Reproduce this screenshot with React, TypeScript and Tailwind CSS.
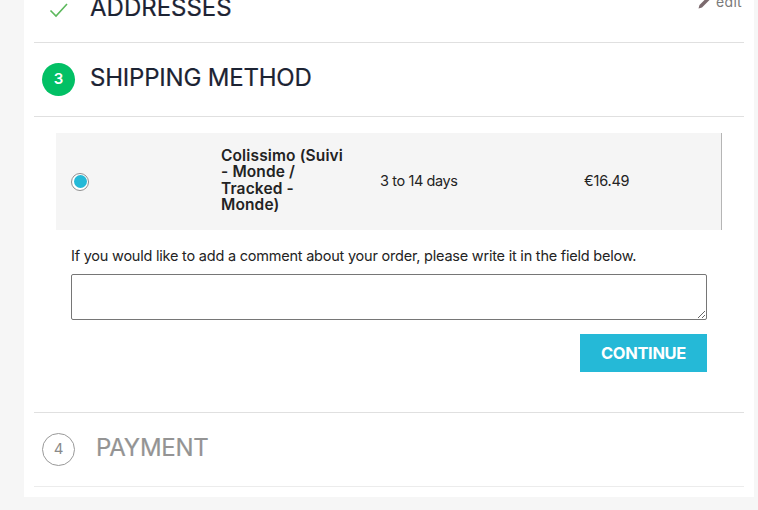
import React from "react";

export default function App() {
  return (
    <div className="h-[510px] w-[758px] overflow-hidden bg-[#f6f6f6] text-[#232323] font-['Inter','Noto_Sans',sans-serif]">
      <div className="ml-6 mt-[-31px] w-[730px] bg-white px-2.5 pb-[10px]">
        {/* Addresses */}
        <section className="relative flex h-[74px] items-center border-b border-[#e0e0e0] pt-[4px]">
          <svg className="ml-[15px] mt-[5px] h-[16px] w-[20px]" viewBox="0 0 20 16" fill="none">
            <path d="M1.5 8.5 L7 14 L18 2" stroke="#5cb85c" strokeWidth="1.6" />
          </svg>
          <h2 className="ml-[21px] text-[24px] font-normal leading-[32px] tracking-[0px] text-[#1c2333] [-webkit-text-stroke:0.2px_#1c2333]">ADDRESSES</h2>
          <span className="absolute right-[2px] top-[24px] flex items-center gap-[5px] text-[14px] leading-[18px] tracking-[0.3px] text-[#7a7a7a]">
            <svg className="h-[13px] w-[13px]" viewBox="0 0 13 13" fill="#7b6a6e">
              <path d="M0.5 12.5 L1.5 9 L9 1.5 L11.5 4 L4 11.5 Z" />
            </svg>
            edit
          </span>
        </section>

        {/* Shipping method */}
        <section className="border-b border-[#e0e0e0]">
          <div className="flex h-[74px] items-center border-b border-[#e0e0e0]">
            <span className="ml-2 flex h-[33px] w-[33px] items-center justify-center rounded-full bg-[#02c065] text-[15px] font-semibold text-white">3</span>
            <h2 className="mb-[3px] ml-[15px] text-[24px] font-normal leading-[32px] tracking-[-0.2px] text-[#1c2333] [-webkit-text-stroke:0.2px_#1c2333]">SHIPPING METHOD</h2>
          </div>
          <div className="px-[22px] pt-4 pb-10">
            <div className="flex h-[97px] w-[666px] items-center border-r border-[#b5b5b5] bg-[#f5f5f5] pl-[15px]">
              <span className="flex h-[18px] w-[18px] items-center justify-center rounded-full border border-[#8f8f8f] bg-white">
                <span className="h-[13px] w-[13px] rounded-full bg-[#25b9d7]" />
              </span>
              <div className="mb-[2px] ml-[132px] w-[126px] text-[15.5px] font-semibold leading-[16.5px] tracking-[0.13px]">Colissimo (Suivi - Monde / Tracked - Monde)</div>
              <div className="mb-[2px] ml-[33px] w-[204px] text-[14.5px] tracking-[-0.4px]">3 to 14 days</div>
              <div className="mb-[2px] text-[14.5px] tracking-[-0.2px]">€16.49</div>
            </div>
            <div className="px-[15px]">
              <p className="mt-[15px] text-[14.5px] leading-[21px] tracking-[-0.22px]">If you would like to add a comment about your order, please write it in the field below.</p>
              <textarea className="mt-[8px] block h-[46px] w-[636px] rounded-[2px] border border-[#767676] bg-white" />
              <div className="mt-[14px] flex w-[636px] justify-end">
                <button className="h-[38px] w-[127px] bg-[#25b9d7] text-[16.5px] font-bold tracking-[-0.35px] text-white">CONTINUE</button>
              </div>
            </div>
          </div>
        </section>

        {/* Payment */}
        <section className="flex h-[74px] items-center border-b border-[#ececec]">
          <span className="ml-2 flex h-[33px] w-[33px] items-center justify-center rounded-full border border-[#999999] text-[15px] font-normal text-[#8a8a8a]">4</span>
          <h2 className="mb-[3px] ml-[21px] text-[24px] font-normal leading-[32px] tracking-[-0.25px] text-[#949494] [-webkit-text-stroke:0.2px_#949494]">PAYMENT</h2>
        </section>
      </div>
    </div>
  );
}
